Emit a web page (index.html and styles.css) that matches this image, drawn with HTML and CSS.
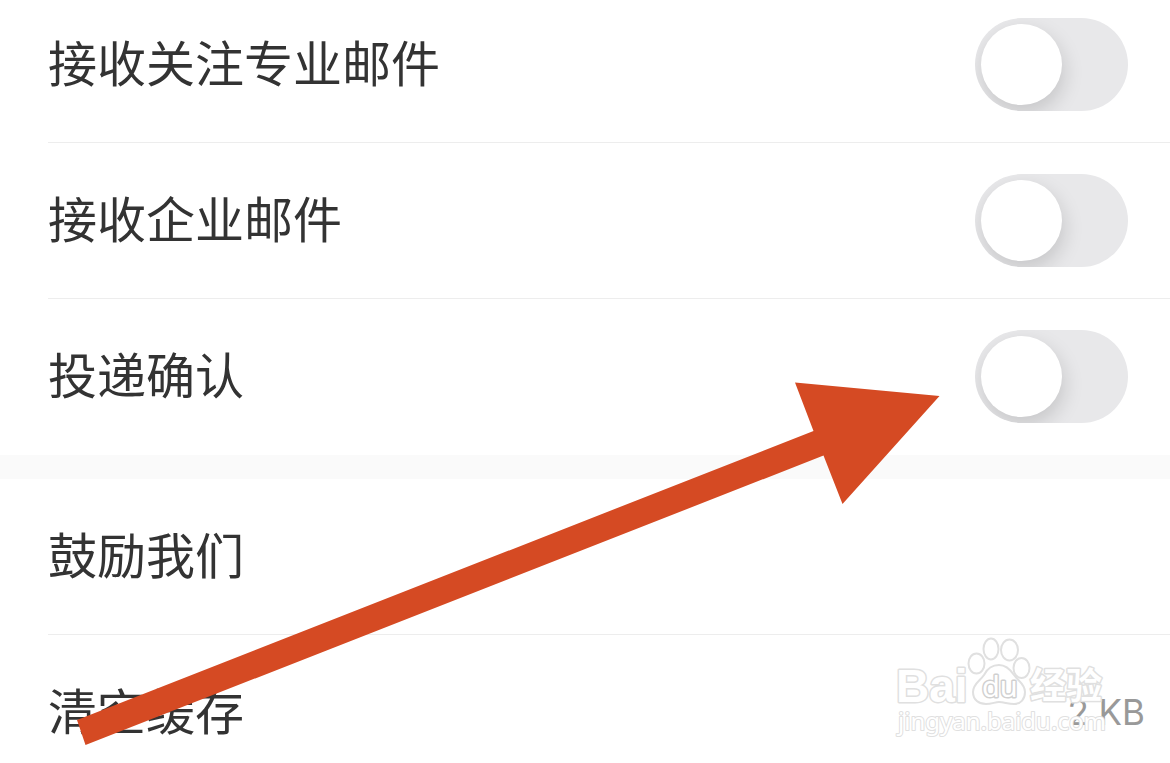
FILE: index.html
```html
<!DOCTYPE html>
<html lang="zh-CN">
<head>
<meta charset="utf-8">
<meta name="viewport" content="width=device-width, initial-scale=1">
<title>设置</title>
<link rel="stylesheet" href="styles.css">
</head>
<body>
<main class="settings">
  <section class="group">
    <div class="row"><label class="label" for="major">接收关注专业邮件</label><input class="switch" type="checkbox" role="switch" id="major"></div>
    <div class="row"><label class="label" for="company">接收企业邮件</label><input class="switch" type="checkbox" role="switch" id="company"></div>
    <div class="row"><label class="label" for="confirm">投递确认</label><input class="switch" type="checkbox" role="switch" id="confirm"></div>
  </section>
  <section class="group">
    <button class="row" type="button"><span class="label">鼓励我们</span></button>
    <button class="row row-value" type="button"><span class="label">清空缓存</span><span class="value">2 KB</span></button>
  </section>
</main>
<svg class="watermark" width="220" height="110" viewBox="890 632 220 110" aria-hidden="true">
  <g class="mark">
    <text class="mark-latin" x="896" y="702">Bai</text>
    <ellipse cx="976.500" cy="663.500" rx="8" ry="10"/>
    <ellipse cx="991" cy="649" rx="7.500" ry="10.500"/>
    <ellipse cx="1009.500" cy="650" rx="8.500" ry="10.500"/>
    <ellipse cx="1021.500" cy="668" rx="8" ry="10"/>
    <path d="M999 665C992 665 987 669 984 675C980 681 973 684 973 692C973 700 979 704 986 704C992 704 995 702 999 702C1004 702 1008 704 1014 704C1021 704 1025 699 1025 692C1025 684 1018 681 1014 675C1010 669 1006 665 999 665Z"/>
    <text class="mark-du" x="982" y="697">du</text>
    <text class="mark-cjk" x="1030" y="699">经验</text>
    <text class="mark-url" x="898" y="730">jingyan.baidu.com</text>
  </g>
</svg>
<svg class="arrow" width="870" height="370" viewBox="75 380 870 370" aria-hidden="true">
  <path d="M77 720L813.500 431L795 382.500L939.500 396L842.500 504L823.500 455.500L85.500 745Z"/>
</svg>
</body>
</html>
```
FILE: styles.css
```css
* {
  box-sizing: border-box;
}

body {
  position: relative;
  margin: 0;
  min-height: 100vh;
  overflow: hidden;
  background: #fff;
  color: #333;
  font-family: "Noto Sans CJK SC", sans-serif;
}

/* The list is scrolled slightly past its first row. */
.settings {
  margin-top: -13px;
}

.group + .group {
  border-top: 24px solid #fafafa;
}

.row {
  position: relative;
  display: flex;
  align-items: center;
  justify-content: space-between;
  width: 100%;
  min-height: 156px;
  padding: 0 42px 2px 48px;
  border: 0;
  background: none;
  color: inherit;
  font: inherit;
  text-align: left;
}

.row:not(:last-child)::after {
  content: "";
  position: absolute;
  right: 0;
  bottom: 0;
  left: 48px;
  height: 1px;
  background: #ededed;
}

.row-value {
  padding-right: 25px;
}

.label {
  padding-bottom: 6px;
  font-size: 49px;
  line-height: 72px;
  font-weight: 400;
}

.value {
  color: #999;
  font-family: Inter, sans-serif;
  font-size: 35px;
  line-height: 48px;
}

.switch {
  appearance: none;
  flex: none;
  width: 153px;
  height: 93px;
  margin: 0;
  padding: 6px;
  border-radius: 47px;
  overflow: hidden;
  background: #e8e8ea;
}

.switch::before {
  content: "";
  display: block;
  width: 81px;
  height: 81px;
  border-radius: 50%;
  background: #fff;
  box-shadow: 2px 8px 20px rgba(0, 0, 0, 0.15);
}

.switch:checked {
  background: #34c759;
}

.switch:checked::before {
  margin-left: auto;
}

.arrow {
  position: absolute;
  top: 380px;
  left: 75px;
  fill: #d54a23;
  pointer-events: none;
}

.watermark {
  position: absolute;
  right: 60px;
  top: 632px;
  pointer-events: none;
}

.mark {
  fill: #fff;
  stroke: #e0e0e0;
  stroke-width: 2px;
  stroke-linejoin: round;
}

.mark text {
  paint-order: stroke;
  stroke-width: 3px;
}

.mark-latin {
  font: bold 46px "Liberation Sans", sans-serif;
}

.mark .mark-du {
  font: 29px "Noto Sans", sans-serif;
  stroke: #d0d0d0;
}

.mark-cjk {
  font: bold 36px "Noto Sans CJK SC", sans-serif;
}

.mark .mark-url {
  font: 24px "Noto Sans", sans-serif;
  stroke-width: 2px;
}
```
